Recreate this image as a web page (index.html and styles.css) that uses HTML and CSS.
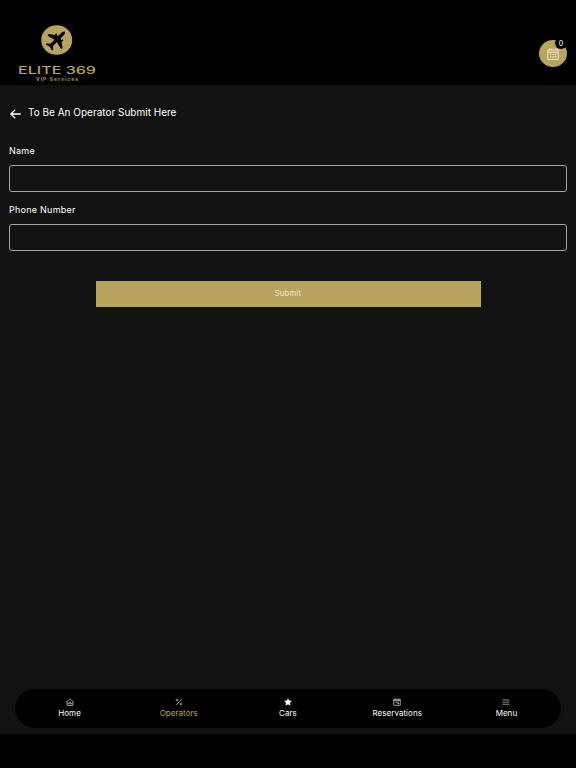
FILE: index.html
```html
<!DOCTYPE html>
<html lang="en">
<head>
    <meta charset="UTF-8">
    <meta name="viewport" content="width=device-width, initial-scale=1.0">
    <title>Elite 369 VIP Services</title>
    <link rel="stylesheet" href="styles.css">
</head>
<body>
    <header class="header">
        <svg class="logo" width="80" height="62" viewBox="0 0 80 62">
            <ellipse cx="39.7" cy="17" rx="15.5" ry="14.8" fill="#b9a45f"/>
            <g transform="translate(39.2 17.4) rotate(45) scale(.93)">
                <path d="M0-13c1.3 0 1.8 2 1.8 4v3.7l2 1.4v-1.7h1.6v2.8l5.1 3.7v2L1.8.8v6l3 2.5v1.6L0 9.7l-4.8 1.2V9.3l3-2.5v-6l-8.7 2.1v-2l5.1-3.7v-2.8h1.6v1.7l2-1.4V-9c0-2 .5-4 1.8-4z" fill="#000"/>
            </g>
            <text class="logo-name" x="1" y="50.5" textLength="78" lengthAdjust="spacingAndGlyphs">ELITE 369</text>
            <text class="logo-sub" x="19" y="58" textLength="42">VIP Services</text>
        </svg>
        <div class="cart">
            <svg width="12" height="12" viewBox="0 0 12 12" fill="none" stroke="#f1ead2">
                <path d="M.8 1.8h10.4v9.6H.8zM.8 4.2h10.4M3.2.3v2M8.8.3v2"/>
                <path d="M3 6.3h1.3M5.5 6.3h1.3M8 6.3h1.3M3 8.8h1.3M5.5 8.8h1.3M7.5 8.8h2" stroke-width="1.3"/>
            </svg>
            <span class="badge">0</span>
        </div>
    </header>
    <main class="main">
        <div class="title">
            <svg width="11" height="10" viewBox="0 0 11 10" fill="none" stroke="#fff" stroke-width="1.3" stroke-linecap="round" stroke-linejoin="round">
                <path d="M4.8 1.2.9 5l3.9 3.8M1 5h9.3"/>
            </svg>
            <h1>To Be An Operator Submit Here</h1>
        </div>
        <form class="form">
            <label for="name">Name</label>
            <input type="text" id="name">
            <label for="phone">Phone Number</label>
            <input type="text" id="phone">
            <button type="button">Submit</button>
        </form>
        <nav class="nav">
            <a class="item">
                <svg width="8" height="8" viewBox="0 0 8 8" fill="none" stroke="#bbb" stroke-width=".8">
                    <path d="M.4 4 4 .9 7.6 4M1.1 3.5v3.9h5.8V3.5M1.5 5.7h5M2.9 4.3h2.2"/>
                </svg>
                <span>Home</span>
            </a>
            <a class="item active">
                <svg width="8" height="8" viewBox="0 0 8 8" fill="none" stroke="#b9a45f" stroke-width=".9">
                    <path d="M1 7 7 1"/>
                    <circle cx="2" cy="2" r=".9"/>
                    <circle cx="6" cy="6" r=".9"/>
                </svg>
                <span>Operators</span>
            </a>
            <a class="item">
                <svg width="8" height="8" viewBox="0 0 8 8" fill="#fff" stroke="#fff" stroke-width=".5" stroke-linejoin="round">
                    <path d="m4 .6 1 2.2 2.5.3-1.8 1.7.5 2.5L4 6.1 1.8 7.3l.5-2.5L.5 3.1 3 2.8z"/>
                </svg>
                <span>Cars</span>
            </a>
            <a class="item">
                <svg width="8" height="8" viewBox="0 0 8 8" fill="none" stroke="#bbb" stroke-width=".8">
                    <path d="M.7 1.3h6.6v6H.7zM.7 2.5h6.6M2.3.4v1.4M5.7.4v1.4M2 4.2h4"/>
                    <path d="M4.6 5.6h1.5" stroke-width="1.2"/>
                </svg>
                <span>Reservations</span>
            </a>
            <a class="item">
                <svg width="8" height="8" viewBox="0 0 8 8" fill="none" stroke="#aaa" stroke-width=".8">
                    <path d="M.5 1.9h7M.5 4.1h7M.5 6.3h7"/>
                </svg>
                <span>Menu</span>
            </a>
        </nav>
    </main>
</body>
</html>
```
FILE: styles.css
```css
* {
    box-sizing: border-box;
}
body {
    margin: 0;
    height: 768px;
    background-color: #000;
    color: #fff;
    font-family: Inter, "Open Sans", sans-serif;
}
.header {
    display: flex;
    justify-content: space-between;
    height: 85px;
    padding: 23px 9px 0 17px;
}
.logo-name {
    fill: #b9a45f;
    font-size: 10.5px;
    font-weight: 500;
}
.logo-sub {
    fill: #b9a45f;
    font-size: 5px;
    font-weight: 600;
}
.cart {
    position: relative;
    display: flex;
    align-items: center;
    justify-content: center;
    width: 28px;
    height: 27px;
    margin-top: 17px;
    border-radius: 50%;
    background-color: #b9a45f;
}
.badge {
    position: absolute;
    top: -3px;
    right: 0;
    width: 12px;
    height: 12px;
    border-radius: 50%;
    background-color: #000;
    font-size: 7px;
    line-height: 13px;
    text-align: center;
}
.main {
    display: flex;
    flex-direction: column;
    height: 649px;
    padding: 19px 9px 6px;
    background-color: #121212;
}
.title {
    display: flex;
    align-items: center;
    gap: 7px;
    height: 16px;
    padding-left: 1px;
}
.title svg {
    margin-top: 3px;
}
h1 {
    margin: 0;
    font-size: 10px;
    font-weight: 400;
    line-height: 16px;
}
.form {
    display: flex;
    flex-direction: column;
    margin-top: 24px;
}
label {
    height: 21px;
    font-size: 9px;
    letter-spacing: 0.25px;
    line-height: 14px;
}
input {
    height: 27px;
    margin-bottom: 11px;
    padding: 0 8px;
    border: 1px solid #a5a5a5;
    border-radius: 3px;
    background-color: transparent;
    color: #fff;
    outline: none;
}
button {
    width: 385px;
    height: 26px;
    margin: 19px auto 0;
    padding: 0 0 2px;
    border: none;
    background-color: #b9a45f;
    color: #f1ead2;
    font-family: inherit;
    font-size: 7.5px;
    letter-spacing: 0.3px;
}
.nav {
    display: flex;
    height: 39px;
    margin: auto 6px 0;
    border-radius: 20px;
    background-color: #000;
}
.item {
    display: flex;
    flex: 1;
    flex-direction: column;
    align-items: center;
    padding-top: 9px;
    font-size: 8px;
    letter-spacing: 0.05px;
    line-height: 14px;
}
.active {
    color: #b9a45f;
}
```
